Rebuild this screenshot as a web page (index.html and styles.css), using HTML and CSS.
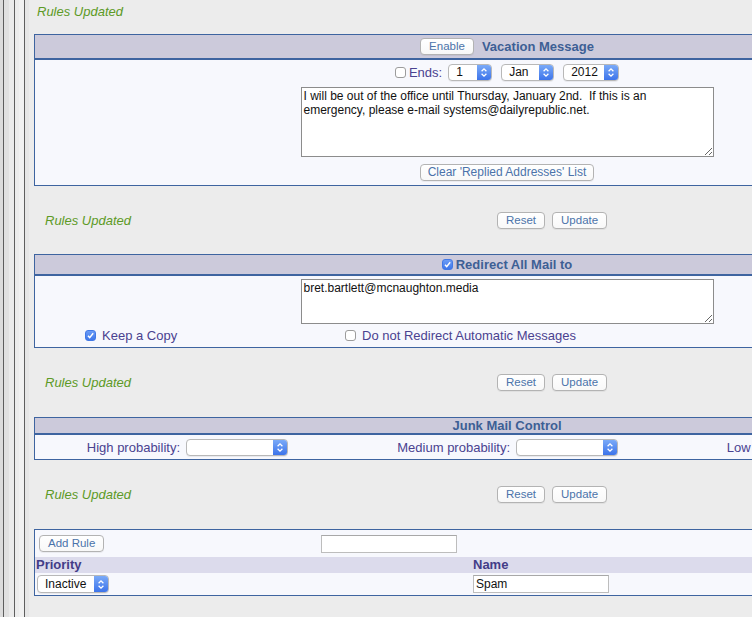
FILE: index.html
```html
<!DOCTYPE html>
<html>
<head>
<meta charset="utf-8">
<link rel="stylesheet" href="styles.css">
</head>
<body>
<div class="rail">
  <span class="s1"></span><span class="ln"></span><span class="s2"></span><span class="s3"></span><span class="ln"></span><span class="s4"></span><span class="s5"></span><span class="ln"></span><span class="s6"></span>
</div>
<div class="main">
  <div class="note top-note">Rules Updated</div>

  <div class="panel">
    <div class="panel-head h-vac">
      <button class="btn">Enable</button>
      <span>Vacation Message</span>
    </div>
    <div class="vac-body">
      <div class="ends">
        <span class="cb"></span>
        <span class="lbl ends-lbl">Ends:</span>
        <span class="sel w44"><span class="sel-v">1</span><span class="sel-a"><svg width="14" height="15" viewBox="0 0 14 15"><path d="M4.6 6.2 L7 3.8 L9.4 6.2 M4.6 8.8 L7 11.2 L9.4 8.8" fill="none" stroke="#fff" stroke-width="1.3"/></svg></span></span>
        <span class="sel w53"><span class="sel-v">Jan</span><span class="sel-a"><svg width="14" height="15" viewBox="0 0 14 15"><path d="M4.6 6.2 L7 3.8 L9.4 6.2 M4.6 8.8 L7 11.2 L9.4 8.8" fill="none" stroke="#fff" stroke-width="1.3"/></svg></span></span>
        <span class="sel w56"><span class="sel-v">2012</span><span class="sel-a"><svg width="14" height="15" viewBox="0 0 14 15"><path d="M4.6 6.2 L7 3.8 L9.4 6.2 M4.6 8.8 L7 11.2 L9.4 8.8" fill="none" stroke="#fff" stroke-width="1.3"/></svg></span></span>
      </div>
      <textarea class="ta ta-vac">I will be out of the office until Thursday, January 2nd.  If this is an emergency, please e-mail systems@dailyrepublic.net.</textarea>
      <button class="btn btn-clear">Clear 'Replied Addresses' List</button>
    </div>
  </div>

  <div class="rules-row r68">
    <span class="note">Rules Updated</span>
    <div class="btns"><button class="btn">Reset</button><button class="btn">Update</button></div>
  </div>

  <div class="panel">
    <div class="panel-head h-red">
      <span class="cb on"><svg width="11" height="11" viewBox="0 0 11 11"><path d="M3 5.8 L4.7 7.6 L8.2 3.3" fill="none" stroke="#fff" stroke-width="1.5"/></svg></span>
      <span>Redirect All Mail to</span>
    </div>
    <div class="red-body">
      <textarea class="ta ta-red">bret.bartlett@mcnaughton.media</textarea>
      <div class="keep">
        <div class="kgroup g1"><span class="cb on"><svg width="11" height="11" viewBox="0 0 11 11"><path d="M3 5.8 L4.7 7.6 L8.2 3.3" fill="none" stroke="#fff" stroke-width="1.5"/></svg></span><span class="lbl">Keep a Copy</span></div>
        <div class="kgroup"><span class="cb"></span><span class="lbl">Do not Redirect Automatic Messages</span></div>
      </div>
    </div>
  </div>

  <div class="rules-row">
    <span class="note">Rules Updated</span>
    <div class="btns"><button class="btn">Reset</button><button class="btn">Update</button></div>
  </div>

  <div class="panel">
    <div class="panel-head h-junk"><span>Junk Mail Control</span></div>
    <div class="junk-body">
      <span class="lbl jl">High probability:</span>
      <span class="sel w102 js"><span class="sel-v"></span><span class="sel-a"><svg width="14" height="15" viewBox="0 0 14 15"><path d="M4.6 6.2 L7 3.8 L9.4 6.2 M4.6 8.8 L7 11.2 L9.4 8.8" fill="none" stroke="#fff" stroke-width="1.3"/></svg></span></span>
      <span class="lbl jl">Medium probability:</span>
      <span class="sel w102 js"><span class="sel-v"></span><span class="sel-a"><svg width="14" height="15" viewBox="0 0 14 15"><path d="M4.6 6.2 L7 3.8 L9.4 6.2 M4.6 8.8 L7 11.2 L9.4 8.8" fill="none" stroke="#fff" stroke-width="1.3"/></svg></span></span>
      <span class="lbl jl">Low probability:</span>
      <span class="sel w102 js"><span class="sel-v"></span><span class="sel-a"><svg width="14" height="15" viewBox="0 0 14 15"><path d="M4.6 6.2 L7 3.8 L9.4 6.2 M4.6 8.8 L7 11.2 L9.4 8.8" fill="none" stroke="#fff" stroke-width="1.3"/></svg></span></span>
    </div>
  </div>

  <div class="rules-row">
    <span class="note">Rules Updated</span>
    <div class="btns"><button class="btn">Reset</button><button class="btn">Update</button></div>
  </div>

  <div class="panel">
    <div class="add-row">
      <div><button class="btn btn-add">Add Rule</button></div>
      <div><input class="inp w136" type="text" value=""></div>
    </div>
    <div class="tbl-head">
      <span>Priority</span>
      <span>Name</span>
    </div>
    <div class="tbl-row">
      <div><span class="sel w72 prio"><span class="sel-v">Inactive</span><span class="sel-a"><svg width="14" height="15" viewBox="0 0 14 15"><path d="M4.6 6.2 L7 3.8 L9.4 6.2 M4.6 8.8 L7 11.2 L9.4 8.8" fill="none" stroke="#fff" stroke-width="1.3"/></svg></span></span></div>
      <div><input class="inp w136 name-inp" type="text" value="Spam"></div>
    </div>
  </div>
</div>
</body>
</html>
```

FILE: styles.css
```css
html, body {
  margin: 0;
  height: 100%;
}
body {
  background: #ececec;
  display: flex;
  overflow: hidden;
  font-family: "Liberation Sans", Arial, sans-serif;
  font-size: 13px;
}

/* left rail */
.rail {
  display: flex;
  flex: 0 0 29px;
  height: 100%;
}
.rail span { display: block; height: 100%; }
.rail .s1 { width: 3px; background: #dcdcdc; }
.rail .ln { width: 1px; background: #5e5e5e; }
.rail .s2 { width: 5px; background: #e1e1e1; }
.rail .s3 { width: 5px; background: #ebebeb; }
.rail .s4 { width: 4px; background: #ececec; }
.rail .s5 { width: 5px; background: #f1f1f1; }
.rail .s6 { width: 4px; background: #e6e6e6; }

.main {
  flex: 0 0 auto;
  width: 946px;
  padding-left: 5px;
}

.note {
  color: #5c9a26;
  font-style: italic;
  font-size: 13px;
}
.top-note {
  padding: 4px 0 0 3px;
  line-height: 16px;
  margin-bottom: 14px;
}

/* panels */
.panel {
  box-sizing: border-box;
  width: 946px;
  border: 1px solid #3e64a0;
  background: #f7f8fd;
}
.panel-head {
  background: #cccadb;
  border-bottom: 2px solid #3e64a0;
  display: flex;
  justify-content: center;
  align-items: center;
  color: #3d5f95;
  font-weight: bold;
  font-size: 13px;
}
.h-vac { height: 23px; gap: 8px; }
.h-red { height: 19px; gap: 3px; }
.h-junk { height: 15px; line-height: 15px; }

/* buttons */
.btn {
  box-sizing: border-box;
  height: 17px;
  padding: 0 8px;
  border: 1px solid #b3b3b3;
  border-radius: 4px;
  background: linear-gradient(#ffffff, #f8f8f8);
  color: #4b73aa;
  font-family: "Liberation Sans", Arial, sans-serif;
  font-size: 11.5px;
  line-height: 15px;
  margin: 0;
  box-shadow: 0 1px 0 rgba(0,0,0,0.05);
}
.btn-clear { font-size: 12px; padding: 0 7px; }
.btns { display: flex; gap: 7px; }

/* checkboxes */
.cb {
  box-sizing: border-box;
  display: inline-flex;
  width: 11px;
  height: 11px;
  border: 1px solid #9c9c9c;
  border-radius: 3px;
  background: #fff;
  flex: 0 0 auto;
}
.cb.on {
  border-color: #4279e6;
  background: linear-gradient(#6b9cf6, #3f77ea);
}
.cb svg { margin: -1px; }

.lbl { color: #4a4290; font-size: 13px; }

/* selects */
.sel {
  box-sizing: border-box;
  display: inline-flex;
  height: 17px;
  border: 1px solid #b8b8b8;
  border-radius: 4px;
  background: #fff;
  font-size: 12px;
  color: #111;
  overflow: hidden;
  box-shadow: 0 1px 0 rgba(0,0,0,0.06);
}
.sel-v {
  flex: 1;
  padding-left: 7px;
  line-height: 15px;
}
.sel-a {
  width: 14px;
  display: flex;
  align-items: center;
  justify-content: center;
  background: linear-gradient(#7aaaf8, #3d74ea);
}
.w44 { width: 44px; }
.w53 { width: 53px; }
.w56 { width: 56px; }
.w72 { width: 72px; }
.w102 { width: 102px; }
.w136 { width: 136px; }

/* textareas */
.ta {
  display: block;
  box-sizing: border-box;
  margin: 0 auto;
  width: 413px;
  border: 1px solid #8c8c8c;
  background: #fff;
  font-family: "Liberation Sans", Arial, sans-serif;
  font-size: 12px;
  line-height: 14px;
  color: #111;
  padding: 1px 2px;
  resize: both;
  outline: none;
}
.ta-vac { height: 70px; }
.ta-red { height: 45px; }

/* vacation body */
.vac-body {
  padding: 4px 0 4px;
  display: flex;
  flex-direction: column;
  align-items: center;
}
.ends {
  display: flex;
  align-items: center;
  height: 17px;
}
.ends .cb { margin-right: 3px; }
.ends-lbl { margin-right: 6px; }
.ends .w44, .ends .w53 { margin-right: 9px; }
.ta-vac { margin-top: 6px; }
.btn-clear { margin-top: 7px; }

/* redirect body */
.red-body { padding-top: 3px; }
.keep {
  display: flex;
  align-items: center;
  height: 23px;
}
.kgroup {
  display: flex;
  align-items: center;
  gap: 6px;
}
.kgroup.g1 {
  width: 260px;
  margin-left: 50px;
}

/* rules row */
.rules-row {
  display: flex;
  align-items: center;
  height: 69px;
  padding-left: 11px;
}
.rules-row.r68 { height: 68px; }
.rules-row .note { width: 452px; }

/* junk body */
.junk-body {
  display: grid;
  grid-template-columns: 148px 108px 222px 108px 199px 108px;
  align-items: center;
  height: 24px;
  padding-top: 1px;
  box-sizing: border-box;
}
.jl { text-align: right; padding-right: 3px; white-space: nowrap; }
.js { margin-left: 3px; }

/* rule table */
.add-row {
  display: grid;
  grid-template-columns: 286px 1fr;
  align-items: center;
  height: 27px;
}
.btn-add { margin-left: 4px; }
.inp {
  box-sizing: border-box;
  height: 18px;
  border: 1px solid #bdbdbd;
  border-top-color: #a8a8a8;
  background: #fff;
  font-family: "Liberation Sans", Arial, sans-serif;
  font-size: 12px;
  padding: 0 2px;
  margin: 0;
  display: block;
  outline: none;
  color: #111;
}
.tbl-head {
  display: grid;
  grid-template-columns: 437px 1fr;
  background: #dcdbec;
  height: 16px;
  line-height: 16px;
  color: #433d88;
  font-weight: bold;
  font-size: 13px;
  padding-left: 1px;
}
.tbl-row {
  display: grid;
  grid-template-columns: 437px 1fr;
  align-items: center;
  height: 22px;
}
.prio { margin-left: 2px; height: 18px; }
.prio .sel-v { line-height: 16px; }
.name-inp { margin-left: 1px; }
```
